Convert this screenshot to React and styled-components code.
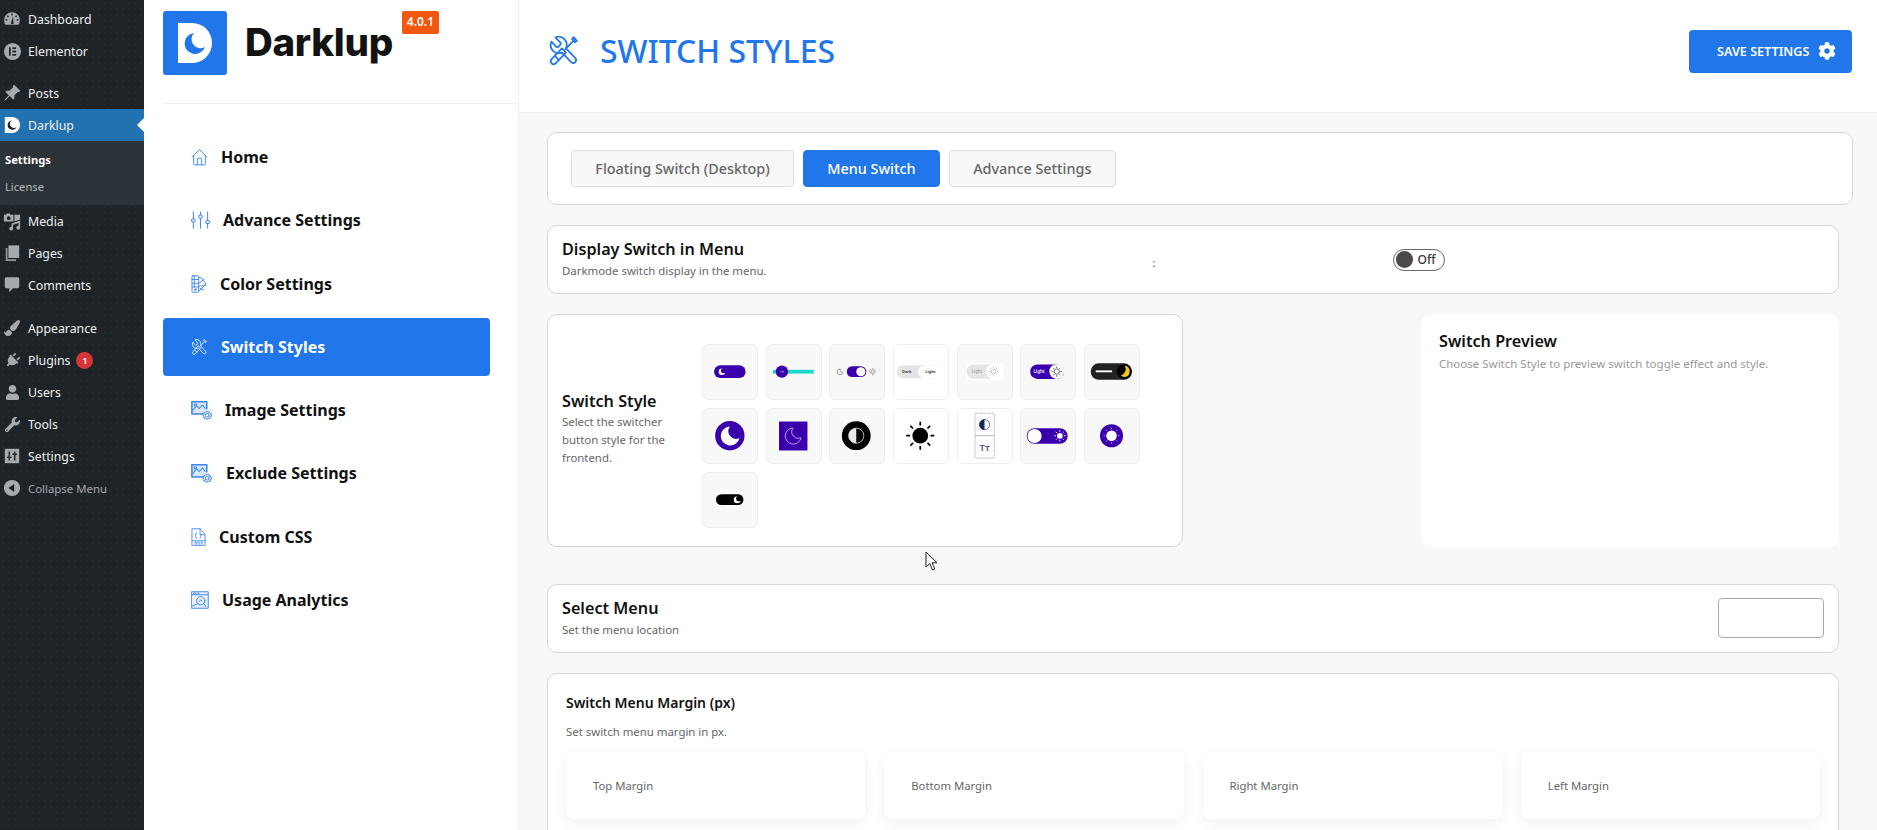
import styled, { createGlobalStyle } from 'styled-components';
import { BsPinAngleFill } from 'react-icons/bs';
import { FaPlug, FaUser, FaWrench, FaCog, FaPaintBrush } from 'react-icons/fa';

const BLUE = '#2176ea';
const PURPLE = '#3a00ad';
const UI_FONT = '"Noto Sans", "Open Sans", "Liberation Sans", sans-serif';

const GlobalStyle = createGlobalStyle`
  html, body {
    margin: 0;
    height: 100%;
    overflow: hidden;
    font-family: ${UI_FONT};
  }
  * { box-sizing: border-box; }
`;

/* ---------- wp admin menu icons ---------- */
const DashIcon = () => (
  <svg viewBox="0 0 20 20" width="18" height="18">
    <path fill="#a7aaad" d="M10 2.5a8.8 8.8 0 0 0-8.8 8.8c0 2 .6 3.800 1.800 5.200h14a8.700 8.700 0 0 0 1.800-5.200A8.800 8.800 0 0 0 10 2.500z" />
    <g fill="#1d2327">
      <circle cx="10" cy="5" r="1" /><circle cx="5.500" cy="7" r="1" /><circle cx="14.500" cy="7" r="1" />
      <circle cx="3.800" cy="11" r="1" /><circle cx="16.200" cy="11" r="1" />
      <path d="M9 14l2.200-7 .4 7a1.400 1.400 0 1 1-2.600 0z" />
    </g>
  </svg>
);
const ElementorIcon = () => (
  <svg viewBox="0 0 20 20" width="19" height="19">
    <circle cx="10" cy="10" r="9" fill="#a7aaad" />
    <g fill="#1d2327">
      <rect x="6.300" y="5.600" width="1.800" height="8.800" />
      <rect x="9.800" y="5.600" width="4" height="1.800" />
      <rect x="9.800" y="9.100" width="4" height="1.800" />
      <rect x="9.800" y="12.600" width="4" height="1.800" />
    </g>
  </svg>
);
const DarklupMark = () => (
  <svg viewBox="0 0 20 20" width="18" height="18">
    <path fill="#fff" d="M2 1h8a9 9 0 0 1 0 18H2z" />
    <path fill="#1d2327" d="M9.500 5a5.200 5.200 0 1 0 5.500 7.500 4.600 4.600 0 0 1-5.500-7.500z" />
  </svg>
);
const MediaIcon = () => (
  <svg viewBox="0 0 20 20" width="19" height="19" fill="#a7aaad">
    <path d="M1 3h2l1-1.500h3L8 3h3v7H1zM4 6.500a2 2 0 1 0 4 0 2 2 0 0 0-4 0z" fillRule="evenodd" />
    <path d="M9 12l9-3v7.500a2 2 0 1 1-1.600-1.900V11.500l-5.800 1.900v4.100a2 2 0 1 1-1.600-1.900z" />
    <path d="M12 3h6v5l-6 2z" />
  </svg>
);
const PagesIcon = () => (
  <svg viewBox="0 0 20 20" width="18" height="18" fill="#a7aaad">
    <path d="M6 1.500h12v14H6z" />
    <path d="M3 4.500h2V17h9.500v1.800H3z" opacity=".85" />
  </svg>
);
const CommentsIcon = () => (
  <svg viewBox="0 0 20 20" width="18" height="18" fill="#a7aaad">
    <path d="M3.500 1.500h13a1.500 1.500 0 0 1 1.500 1.500v9a1.500 1.500 0 0 1-1.500 1.500H11l-4 4.500v-4.500H3.500A1.500 1.500 0 0 1 2 12V3a1.500 1.500 0 0 1 1.500-1.500z" />
  </svg>
);
const SettingsIcon = () => (
  <svg viewBox="0 0 20 20" width="18" height="18">
    <rect x="2" y="2" width="16" height="16" fill="#a7aaad" />
    <g stroke="#1d2327" strokeWidth="1.600">
      <path d="M7 5v10M4.500 11.500h5M13 5v10M10.500 8h5" />
    </g>
  </svg>
);
const CollapseIcon = () => (
  <svg viewBox="0 0 20 20" width="18" height="18">
    <circle cx="10" cy="10" r="9" fill="#a7aaad" />
    <path fill="#1d2327" d="M12.500 5.500v9L6 10z" />
  </svg>
);

/* ---------- blue line icons for the plugin nav ---------- */
const Line = ({ w = 18, h = 18, color = '#3f88ee', children }) => (
  <svg viewBox="0 0 24 24" width={w} height={h} fill="none" stroke={color} strokeWidth="1.300" strokeLinecap="round" strokeLinejoin="round" preserveAspectRatio="none">
    {children}
  </svg>
);
const HomeGlyph = () => (
  <>
    <path d="M1.500 12L12 2l10.500 10" />
    <path d="M3.800 10v11.500a1 1 0 0 0 1 1h14.400a1 1 0 0 0 1-1V10" />
    <path d="M9 22.500v-8a1 1 0 0 1 1-1h4a1 1 0 0 1 1 1v8" />
  </>
);
const SlidersGlyph = () => (
  <>
    <path d="M3 1v9M3 15v8M12 1v4M12 10v13M21 1v11M21 17v6" />
    <circle cx="3" cy="12.500" r="2.300" /><circle cx="12" cy="7.500" r="2.300" /><circle cx="21" cy="14.500" r="2.300" />
  </>
);
const PaletteGlyph = () => (
  <>
    <rect x="1.500" y="1" width="10" height="22" rx="1" />
    <path d="M1.500 6h10M1.500 11h10M1.500 16h10M5 1v15" />
    <circle cx="6.500" cy="19.500" r="1.300" />
    <path d="M11.500 3l5 1 6 8-11 10M11.500 11l8-5M11.500 15l10-1M14 18l5 2" />
  </>
);
const ToolsGlyph = () => (
  <>
    <g transform="translate(24 0) scale(-1 1)">
      <path d="M14.700 6.300a1 1 0 0 0 0 1.400l1.600 1.600a1 1 0 0 0 1.400 0l3.770-3.770a6 6 0 0 1-7.940 7.940l-6.910 6.910a2.120 2.120 0 0 1-3-3l6.910-6.910a6 6 0 0 1 7.940-7.940l-3.760 3.760z" />
    </g>
    <path d="M20.500 3.500L13 11" />
    <path d="M19 2.300l2.700 2.700-1.500 1-2.200-2.200z" />
    <path d="M10.500 10.500l3 3-7.800 7.800a2.100 2.100 0 0 1-3-3z" />
    <path d="M5 15.800l3 3" />
  </>
);
const ImageGearGlyph = () => (
  <>
    <path d="M14 16.500H1V1h17v9" fill="rgba(33,118,234,.18)" strokeWidth="1.800" />
    <path d="M1 13l5.500-7 3 3.500L13 5l3 4" />
    <circle cx="5" cy="5" r="1.400" />
    <circle cx="18.500" cy="18" r="2.200" />
    <circle cx="18.500" cy="18" r="4.600" strokeDasharray="2 1.200" />
  </>
);
const CssGlyph = () => (
  <>
    <path d="M1.500 23V1h13l8 8v14z" />
    <path d="M14.500 1v8h8M1.500 17h21" />
    <path d="M9 6c-2 0-1 3.500-1.800 4.500C8 11.500 7 14 9 14M15 9c1.500 0 .5 1 1 1.500-.5 1-.500 3.500-1.500 3.500" />
    <path d="M6 19h3M11 19h2.500M16 19h2.500M6 21.300h3M11 21.300h2.500M16 21.300h2.500" />
  </>
);
const AnalyticsGlyph = () => (
  <>
    <rect x="1" y="1" width="22" height="22" fill="rgba(33,118,234,.1)" />
    <path d="M1 5h22M3 3h4M9 3h2" />
    <circle cx="13" cy="13" r="5.500" />
    <path d="M9 17l-7 3M17 17l3 4M11 14l2-2 1.500 1" />
  </>
);

const navItems = [
  { label: 'Home', icon: <HomeGlyph />, w: 17 },
  { label: 'Advance Settings', icon: <SlidersGlyph />, w: 19 },
  { label: 'Color Settings', icon: <PaletteGlyph />, w: 16 },
  { label: 'Switch Styles', icon: <ToolsGlyph />, w: 17, active: true },
  { label: 'Image Settings', icon: <ImageGearGlyph />, w: 21 },
  { label: 'Exclude Settings', icon: <ImageGearGlyph />, w: 21, gap: 14 },
  { label: 'Custom CSS', icon: <CssGlyph />, w: 15 },
  { label: 'Usage Analytics', icon: <AnalyticsGlyph />, w: 18 },
];

const wpItems = [
  { label: 'Dashboard', icon: <DashIcon /> },
  { label: 'Elementor', icon: <ElementorIcon /> },
  { label: 'Posts', icon: <BsPinAngleFill size={18} color="#a7aaad" />, gap: 10 },
  { label: 'Darklup', icon: <DarklupMark />, current: true },
  { label: 'Media', icon: <MediaIcon /> },
  { label: 'Pages', icon: <PagesIcon /> },
  { label: 'Comments', icon: <CommentsIcon /> },
  { label: 'Appearance', icon: <FaPaintBrush size={16} color="#a7aaad" />, gap: 11 },
  { label: 'Plugins', icon: <FaPlug size={15} color="#a7aaad" style={{ transform: 'rotate(45deg)' }} />, badge: 1 },
  { label: 'Users', icon: <FaUser size={15} color="#a7aaad" /> },
  { label: 'Tools', icon: <FaWrench size={15} color="#a7aaad" /> },
  { label: 'Settings', icon: <SettingsIcon /> },
  { label: 'Collapse Menu', icon: <CollapseIcon />, muted: true },
];

/* ---------- switch style thumbnails, 57x56 ---------- */
const tinyMoon = (cx, cy, r, fill, cut) => (
  <>
    <circle cx={cx} cy={cy} r={r} fill={fill} />
    <circle cx={cx + r * 0.5} cy={cy - r * 0.35} r={r * 0.82} fill={cut} />
  </>
);
const rays = (cx, cy, a, b, color, width) =>
  [0, 45, 90, 135, 180, 225, 270, 315].map((deg) => {
    const t = (deg * Math.PI) / 180;
    return (
      <line key={deg} x1={cx + Math.cos(t) * a} y1={cy + Math.sin(t) * a} x2={cx + Math.cos(t) * b} y2={cy + Math.sin(t) * b} stroke={color} strokeWidth={width} />
    );
  });
const miniSun = (cx, cy, r, color, a, b, width) => (
  <>
    <circle cx={cx} cy={cy} r={r} fill="none" stroke={color} strokeWidth={width} />
    {rays(cx, cy, a, b, color, width)}
  </>
);

const tiles = [
  {
    art: (
      <>
        <rect x="11.700" y="21" width="33.300" height="13.300" rx="6.600" fill={PURPLE} />
        {tinyMoon(20, 27.700, 3.400, '#fff', PURPLE)}
      </>
    ),
  },
  {
    art: (
      <>
        <rect x="6.300" y="25.700" width="43" height="4" fill="#19d9c9" />
        <circle cx="15.700" cy="27.700" r="6.500" fill={PURPLE} />
        <path d="M13.500 27.700h4M16 26l1.600 1.700-1.600 1.700" stroke="#b9a6e8" strokeWidth=".6" fill="none" />
      </>
    ),
  },
  {
    art: (
      <>
        <path d="M10.900 24.800a3 3 0 1 0 2.700 3.400 2.400 2.400 0 0 1-2.700-3.400z" fill="none" stroke="#777" strokeWidth=".8" />
        <rect x="17.700" y="22" width="20.600" height="11.300" rx="5.600" fill={PURPLE} />
        <circle cx="32.500" cy="27.700" r="4.800" fill="#fff" />
        {miniSun(45, 27.700, 1.800, '#888', 2.500, 3.800, 0.9)}
      </>
    ),
  },
  {
    white: true,
    art: (
      <>
        <rect x="3" y="21" width="50" height="13.700" rx="6.800" fill="#e4e4e4" />
        <rect x="25.500" y="21" width="27.500" height="13.700" rx="6.800" fill="#fff" />
        <text x="13.500" y="29.300" fontSize="4.200" fontWeight="700" fill="#444" textAnchor="middle" fontFamily={UI_FONT}>Dark</text>
        <text x="38.500" y="29.300" fontSize="4.200" fontWeight="700" fill="#444" textAnchor="middle" fontFamily={UI_FONT}>Light</text>
      </>
    ),
  },
  {
    art: (
      <>
        <rect x="8.700" y="18.700" width="39" height="18" fill="#fff" />
        <rect x="9" y="20" width="35" height="15" rx="7.500" fill="#e5e5e5" />
        <circle cx="37.500" cy="27.500" r="8" fill="#fff" />
        <text x="20" y="29.200" fontSize="4.600" fill="#999" textAnchor="middle" fontFamily={UI_FONT}>Light</text>
        {miniSun(37.500, 27.500, 2.500, '#aaa', 3.700, 5, 0.7)}
      </>
    ),
  },
  {
    art: (
      <>
        <rect x="9.700" y="20" width="35.600" height="15.300" rx="7.600" fill={PURPLE} />
        <circle cx="37.700" cy="27.500" r="7.800" fill="#fff" />
        <text x="19" y="29.200" fontSize="4.600" fontWeight="700" fill="#e4dcf7" textAnchor="middle" fontFamily={UI_FONT}>Light</text>
        {miniSun(37.700, 27.500, 2.700, '#333', 3.800, 5.500, 0.8)}
      </>
    ),
  },
  {
    art: (
      <>
        <rect x="6" y="18.700" width="43.700" height="17.600" rx="8.800" fill="#222" />
        <rect x="11.300" y="26.300" width="17.300" height="2" fill="#fff" />
        <circle cx="41.300" cy="27.500" r="7.800" fill="#000" />
        <path d="M42 21.500a6 6 0 0 1 .5 11.800 6 6 0 0 1-4.500-1.700 7 7 0 0 0 4-10.100z" fill="#f5c518" />
      </>
    ),
  },
  {
    art: (
      <>
        <circle cx="28.300" cy="27.700" r="15.500" fill={PURPLE} />
        <path d="M28.500 18a10 10 0 1 0 10 12 8 8 0 0 1-10-12z" fill="#fff" />
      </>
    ),
  },
  {
    art: (
      <>
        <rect x="12.700" y="12.700" width="30" height="30.600" fill={PURPLE} />
        <path d="M27.500 19.500a8.500 8.500 0 1 0 8.500 10.500 7 7 0 0 1-8.500-10.500z" fill="none" stroke="#d8cdf3" strokeWidth=".8" />
      </>
    ),
  },
  {
    art: (
      <>
        <circle cx="27.700" cy="27.700" r="15.200" fill="#000" />
        <circle cx="27.700" cy="27.700" r="8" fill="#000" stroke="#eee" strokeWidth=".8" />
        <path d="M27.700 19.700a8 8 0 0 0 0 16z" fill="#e8e8e8" />
      </>
    ),
  },
  {
    white: true,
    art: (
      <>
        <circle cx="27.700" cy="27.700" r="8.300" fill="#000" />
        {rays(27.700, 27.700, 10.800, 14.800, '#000', 1.800)}
      </>
    ),
  },
  {
    white: true,
    art: (
      <>
        <rect x="18" y="4" width="20.300" height="47.300" rx="1" fill="#fff" stroke="#aaa" strokeWidth=".9" strokeDasharray="1 .4" />
        <line x1="18" y1="27.700" x2="38.300" y2="27.700" stroke="#aaa" strokeWidth=".9" />
        <circle cx="28" cy="16" r="5.400" fill="#fff" stroke="#14235e" strokeWidth=".7" />
        <path d="M28 10.600a5.400 5.400 0 0 0 0 10.800z" fill="#14235e" />
        <text x="28" y="44" fontSize="10" fontWeight="600" fill="#4a5a8a" textAnchor="middle" fontFamily={UI_FONT}>Tт</text>
      </>
    ),
  },
  {
    art: (
      <>
        <rect x="6" y="19.700" width="43.300" height="16.600" rx="8.300" fill={PURPLE} />
        <circle cx="14.300" cy="28" r="7.500" fill="#fff" />
        <circle cx="41" cy="27.800" r="3" fill="#fff" />
        {rays(41, 27.800, 4.200, 6, '#fff', 0.9)}
      </>
    ),
  },
  {
    art: (
      <>
        <circle cx="28" cy="27.700" r="12.200" fill={PURPLE} />
        <circle cx="28" cy="27.700" r="5.600" fill="#fff" />
        {rays(28, 27.700, 7, 8.300, '#d9cff3', 0.9)}
      </>
    ),
  },
  {
    art: (
      <>
        <rect x="13.700" y="22" width="29" height="11.300" rx="5.600" fill="#000" />
        {tinyMoon(36.200, 27.700, 3.700, '#fff', '#000')}
      </>
    ),
  },
];

const margins = ['Top Margin', 'Bottom Margin', 'Right Margin', 'Left Margin'];

const App = () => {
  return (
    <>
      <GlobalStyle />
      <Page>
        <AdminMenu>
          {wpItems.map((item) => (
            <div key={item.label}>
              <AdminItem $gap={item.gap} $current={item.current} $muted={item.muted}>
                <AdminIcon>{item.icon}</AdminIcon>
                {item.label}
                {item.badge && <Badge>{item.badge}</Badge>}
              </AdminItem>
              {item.current && (
                <SubMenu>
                  <SubItem $on>Settings</SubItem>
                  <SubItem>License</SubItem>
                </SubMenu>
              )}
            </div>
          ))}
        </AdminMenu>

        <PluginNav>
          <Brand>
            <LogoBox>
              <svg viewBox="0 0 64 64" width="64" height="64">
                <path fill="#fff" d="M15 12h14a20 20 0 0 1 0 40H15z" />
                <path fill={BLUE} d="M31 22a10.500 10.500 0 1 0 11 14 9 9 0 0 1-11-14z" />
              </svg>
            </LogoBox>
            <BrandName>Darklup</BrandName>
            <Version>4.0.1</Version>
          </Brand>
          <NavList>
            {navItems.map((item) => (
              <NavItem key={item.label} $active={item.active} $gap={item.gap}>
                <Line w={item.w} h={item.label === 'Image Settings' || item.label === 'Exclude Settings' ? 19 : 18} color={item.active ? '#dbe8fb' : undefined}>
                  {item.icon}
                </Line>
                {item.label}
              </NavItem>
            ))}
          </NavList>
        </PluginNav>

        <Main>
          <TopBar>
            <Heading>
              <Line w={32} h={33} color={BLUE}><ToolsGlyph /></Line>
              SWITCH STYLES
            </Heading>
            <SaveButton>
              SAVE SETTINGS
              <FaCog size={18} />
            </SaveButton>
          </TopBar>

          <Content>
            <TabCard>
              <Tab>Floating Switch (Desktop)</Tab>
              <Tab $active>Menu Switch</Tab>
              <Tab>Advance Settings</Tab>
            </TabCard>

            <OptionCard>
              <OptionText>
                <OptionTitle>Display Switch in Menu</OptionTitle>
                <OptionDesc>Darkmode switch display in the menu.</OptionDesc>
              </OptionText>
              <Colon>:</Colon>
              <Toggle>
                <Knob />
                Off
              </Toggle>
            </OptionCard>

            <StyleRow>
              <StyleCard>
                <StyleIntro>
                  <OptionTitle>Switch Style</OptionTitle>
                  <StyleDesc>Select the switcher button style for the frontend.</StyleDesc>
                </StyleIntro>
                <TileGrid>
                  {tiles.map((tile, i) => (
                    <Tile key={i} $white={tile.white}>
                      <svg viewBox="0 0 57 56" width="100%" height="100%">{tile.art}</svg>
                    </Tile>
                  ))}
                </TileGrid>
              </StyleCard>
              <PreviewCard>
                <OptionTitle>Switch Preview</OptionTitle>
                <PreviewDesc>Choose Switch Style to preview switch toggle effect and style.</PreviewDesc>
              </PreviewCard>
            </StyleRow>

            <SelectCard>
              <OptionText>
                <OptionTitle>Select Menu</OptionTitle>
                <OptionDesc>Set the menu location</OptionDesc>
              </OptionText>
              <SelectBox />
            </SelectCard>

            <MarginCard>
              <MarginTitle>Switch Menu Margin (px)</MarginTitle>
              <MarginDesc>Set switch menu margin in px.</MarginDesc>
              <MarginGrid>
                {margins.map((m) => (
                  <MarginField key={m}>{m}</MarginField>
                ))}
              </MarginGrid>
            </MarginCard>
          </Content>
        </Main>

        <Cursor viewBox="0 0 14 20" width="14" height="20">
          <path d="M1 1v15l3.800-3.400L7.500 19l2.300-1-2.700-6.200H12z" fill="#fff" stroke="#222" strokeWidth="1" />
        </Cursor>
      </Page>
    </>
  );
};

const Page = styled.div`
  position: relative;
  display: flex;
  width: 100%;
  height: 100vh;
  overflow: hidden;
  background: #f8f8f8;
`;

const AdminMenu = styled.nav`
  flex: 0 0 144px;
  padding-top: 3px;
  background-color: #1d2327;
  background-image: radial-gradient(rgba(255, 255, 255, 0.05) 0.6px, transparent 0.8px);
  background-size: 6px 6px;
`;

const AdminItem = styled.div`
  position: relative;
  display: flex;
  align-items: center;
  height: 32px;
  margin-top: ${(p) => p.$gap || 0}px;
  padding-left: 2px;
  font-size: ${(p) => (p.$muted ? 11.4 : 12.3)}px;
  color: ${(p) => (p.$muted ? '#a7aaad' : '#f0f0f1')};
  background: ${(p) => (p.$current ? '#2271b1' : 'transparent')};

  ${(p) =>
    p.$current &&
    `&::after {
      content: '';
      position: absolute;
      right: 0;
      top: 9px;
      border: 7px solid transparent;
      border-right-color: #fff;
      border-left-width: 0;
    }`}
`;

const AdminIcon = styled.span`
  display: flex;
  align-items: center;
  justify-content: center;
  width: 20px;
  margin-right: 6px;
`;

const Badge = styled.span`
  display: flex;
  align-items: center;
  justify-content: center;
  width: 17px;
  height: 17px;
  margin-left: 6px;
  border-radius: 50%;
  background: #d63638;
  color: #fff;
  font-size: 9.5px;
  font-weight: 600;
`;

const SubMenu = styled.div`
  height: 64px;
  padding-top: 5px;
  background: #2c3338;
`;

const SubItem = styled.div`
  height: 27px;
  padding-left: 5px;
  line-height: 27px;
  font-size: 11.2px;
  font-weight: ${(p) => (p.$on ? 700 : 400)};
  color: ${(p) => (p.$on ? '#fff' : '#b4b9be')};
`;

const PluginNav = styled.aside`
  flex: 0 0 375px;
  padding-left: 19px;
  background: #fff;
  border-right: 1px solid #efefef;
`;

const Brand = styled.div`
  display: flex;
  align-items: flex-start;
  height: 104px;
  padding-top: 11px;
  border-bottom: 1px solid #efefef;
`;

const LogoBox = styled.div`
  width: 64px;
  height: 64px;
  overflow: hidden;
  border-radius: 3px;
  background: ${BLUE};
`;

const BrandName = styled.div`
  margin: 7px 9px 0 18px;
  font-family: Inter, "Liberation Sans", sans-serif;
  font-size: 38.5px;
  line-height: 48px;
  font-weight: 800;
  letter-spacing: -0.3px;
  color: #131313;
`;

const Version = styled.div`
  width: 37px;
  height: 23px;
  border-radius: 2px;
  background: #f2580f;
  color: #fff;
  font-size: 12px;
  font-weight: 600;
  line-height: 22px;
  text-align: center;
`;

const NavList = styled.div`
  display: flex;
  flex-direction: column;
  gap: 5.3px;
  padding: 24px 28px 0 0;
`;

const NavItem = styled.div`
  display: flex;
  align-items: center;
  gap: ${(p) => p.$gap || 13}px;
  height: 58px;
  padding-left: 28px;
  border-radius: 4px;
  font-size: 16px;
  font-weight: 700;
  color: ${(p) => (p.$active ? '#fff' : '#111')};
  background: ${(p) => (p.$active ? BLUE : 'transparent')};
`;

const Main = styled.main`
  flex: 1;
  min-width: 0;
`;

const TopBar = styled.header`
  display: flex;
  align-items: center;
  justify-content: space-between;
  height: 113px;
  padding: 0 25px 10px 29px;
  background: #fff;
  border-bottom: 1px solid #efefef;
`;

const Heading = styled.h1`
  display: flex;
  align-items: center;
  gap: 20px;
  margin: 0 0 2px;
  font-size: 31.9px;
  font-weight: 500;
  color: ${BLUE};
`;

const SaveButton = styled.button`
  display: flex;
  align-items: center;
  gap: 9px;
  width: 163px;
  height: 43px;
  padding: 0 0 0 28px;
  border: 0;
  border-radius: 4px;
  background: ${BLUE};
  color: #fff;
  font-family: inherit;
  font-size: 12.6px;
  font-weight: 600;
`;

const Content = styled.div`
  display: flex;
  flex-direction: column;
  gap: 20px;
  padding: 19px 24px 0 28px;
`;

const TabCard = styled.div`
  display: flex;
  align-items: center;
  gap: 9px;
  height: 73px;
  padding-left: 23px;
  background: #fff;
  border: 1px solid #d6d6d6;
  border-radius: 10px;
`;

const Tab = styled.div`
  height: 37px;
  padding: 0 23.3px;
  line-height: 35px;
  font-size: 14.4px;
  font-weight: 500;
  color: ${(p) => (p.$active ? '#fff' : '#666')};
  background: ${(p) => (p.$active ? BLUE : '#f8f8f8')};
  border: 1px solid ${(p) => (p.$active ? BLUE : '#dedede')};
  border-radius: 4px;
`;

const OptionCard = styled.div`
  position: relative;
  display: flex;
  align-items: center;
  height: 69px;
  margin-right: 14px;
  padding: 0 0 2px 14px;
  background: #fff;
  border: 1px solid #d6d6d6;
  border-radius: 10px;
`;

const OptionText = styled.div`
  display: flex;
  flex-direction: column;
  gap: 2px;
`;

const OptionTitle = styled.div`
  font-size: 16.2px;
  line-height: 22px;
  font-weight: 600;
  color: #111;
`;

const OptionDesc = styled.div`
  font-size: 11.4px;
  line-height: 18px;
  color: #666;
`;

const Colon = styled.span`
  margin-left: 386px;
  padding-top: 8px;
  font-size: 11px;
  color: #2c5a8f;
`;

const Toggle = styled.div`
  display: flex;
  align-items: center;
  gap: 5px;
  width: 52px;
  height: 22px;
  margin: 2px 0 0 237px;
  padding-left: 2px;
  border: 1px solid #666;
  border-radius: 11px;
  font-size: 12px;
  font-weight: 500;
  color: #333;
`;

const Knob = styled.span`
  width: 17px;
  height: 17px;
  border-radius: 50%;
  background: #4a4a4a;
`;

const StyleRow = styled.div`
  display: flex;
  justify-content: space-between;
  height: 233px;
  margin-right: 14px;
`;

const StyleCard = styled.div`
  display: flex;
  width: 636px;
  padding: 0 14px;
  background: #fff;
  border: 1px solid #d6d6d6;
  border-radius: 10px;
`;

const StyleIntro = styled.div`
  flex: 0 0 140px;
  align-self: center;
  padding: 0 30px 5px 0;
`;

const StyleDesc = styled.div`
  margin-top: 1px;
  font-size: 11.4px;
  line-height: 18px;
  color: #666;
`;

const TileGrid = styled.div`
  display: grid;
  grid-template-columns: repeat(7, 56px);
  grid-auto-rows: 56px;
  column-gap: 7.7px;
  row-gap: 8px;
  align-self: flex-start;
  padding-top: 29px;
`;

const Tile = styled.div`
  background: ${(p) => (p.$white ? '#fff' : '#f8f8f8')};
  border: 1px solid #eee;
  border-radius: 6px;
  overflow: hidden;
`;

const PreviewCard = styled.div`
  width: 418px;
  padding: 16px 18px;
  background: #fff;
  border-radius: 10px;
`;

const PreviewDesc = styled.div`
  margin-top: 3px;
  font-size: 11.5px;
  line-height: 18px;
  color: #999;
`;

const SelectCard = styled(OptionCard)`
  justify-content: space-between;
  margin-top: 17px;
  padding-right: 14px;
`;

const SelectBox = styled.div`
  width: 106px;
  height: 40px;
  background: #fff;
  border: 1px solid #aaa;
  border-radius: 4px;
`;

const MarginCard = styled.div`
  margin-right: 14px;
  padding: 18px 18px 40px;
  background: #fff;
  border: 1px solid #d6d6d6;
  border-radius: 10px;
`;

const MarginTitle = styled(OptionTitle)`
  font-size: 14px;
`;

const MarginDesc = styled(OptionDesc)`
  margin-top: 9px;
`;

const MarginGrid = styled.div`
  display: grid;
  grid-template-columns: repeat(4, 1fr);
  gap: 19px;
  margin-top: 11px;
`;

const MarginField = styled.div`
  display: flex;
  align-items: center;
  height: 67px;
  padding-left: 27px;
  border-radius: 8px;
  background: #fff;
  box-shadow: 0 4px 14px rgba(0, 0, 0, 0.06);
  font-size: 11.3px;
  color: #666;
`;

const Cursor = styled.svg`
  position: absolute;
  left: 925px;
  top: 551px;
`;

export default App;
